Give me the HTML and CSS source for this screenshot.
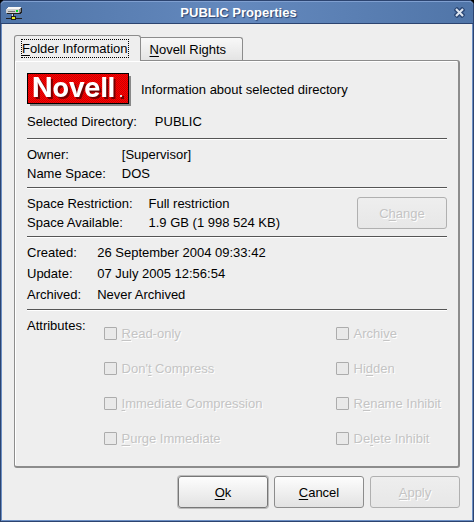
FILE: index.html
```html
<!DOCTYPE html>
<html lang="en">
<head>
	<meta charset="utf-8">
	<meta name="viewport" content="width=device-width, initial-scale=1">

	<title>PUBLIC Properties</title>

	<link rel="stylesheet" href="styles.css">
</head>
<body>
	<div class="window">

		<!-- Title bar -->
		<header class="title-bar">
			<svg class="title-icon" width="18" height="16" viewBox="0 0 18 16" shape-rendering="crispEdges">
				<path d="M3 2h13v1h1v5h-1v1H2V8H1V5h1V4h1z" fill="#222"/>
				<path d="M3 2h13v1h-1v1H2V3h1z" fill="#f8f8f8"/>
				<path d="M1 4h13v4H1z" fill="#d0d0d0"/>
				<path d="M14 4h1V3h1v4h-1v1h-1z" fill="#888"/>
				<path d="M3 6h7v1H3z" fill="#777"/>
				<path d="M11 5h2v2h-2z" fill="#0d2"/>
				<path d="M7 9h2v2H7zM1 13h16v1H1z" fill="#222"/>
				<path d="M6 11h5v4H6z" fill="#222"/>
				<path d="M7 12h3v2H7z" fill="#ee2"/>
				<path d="M7 9h1v2H7z" fill="#ddd"/>
			</svg>
			<h1 class="title-text">PUBLIC Properties</h1>
			<button type="button" class="btn-close" aria-label="Close">
				<svg width="11" height="11" viewBox="0 0 11 11">
					<path d="M3 3l5 5m0-5l-5 5" stroke="#2e4a78" stroke-width="5" stroke-linecap="square"/>
					<path d="M2 2l7 7m0-7l-7 7" stroke="#dfe6f0" stroke-width="2"/>
				</svg>
			</button>
		</header>

		<form class="content">
			<!-- Tabs -->
			<div class="tabs" role="tablist">
				<button type="button" class="tab tab-active" role="tab" aria-selected="true"><span class="tab-label"><u>F</u>older Information</span></button>
				<button type="button" class="tab" role="tab" aria-selected="false"><span class="tab-label"><u>N</u>ovell Rights</span></button>
			</div>

			<div class="panel" role="tabpanel">
				<div class="intro">
					<svg class="logo" width="104" height="33" viewBox="0 0 104 33">
						<defs>
							<pattern id="dots" width="2" height="2" patternUnits="userSpaceOnUse">
								<path d="M0 0h2v2H0z" fill="#f00"/>
								<path d="M0 0h1v1H0zM1 1h1v1H1z" fill="#cc0000"/>
							</pattern>
						</defs>
						<path d="M3 3h101v30H3z" fill="#888"/>
						<path d="M0 0h102v31H0z" fill="#000"/>
						<path d="M1 1h100v29H1z" fill="url(#dots)"/>
						<text class="logo-text" x="5" y="24">Novell</text>
						<path d="M94 23h3v3h-3z" fill="#700"/>
						<path d="M93 22h2v2h-2z" fill="#ddd"/>
					</svg>
					<p>Information about selected directory</p>
				</div>

				<dl class="details selected">
					<dt>Selected Directory:</dt>
					<dd>PUBLIC</dd>
				</dl>

				<div class="section">
					<dl class="details">
						<dt>Owner:</dt>
						<dd>[Supervisor]</dd>
						<dt>Name Space:</dt>
						<dd>DOS</dd>
					</dl>
				</div>

				<div class="section">
					<dl class="details">
						<dt>Space Restriction:</dt>
						<dd>Full restriction</dd>
						<dt>Space Available:</dt>
						<dd>1.9 GB (1 998 524 KB)</dd>
					</dl>
					<button type="button" class="btn" disabled>C<u>h</u>ange</button>
				</div>

				<div class="section section-dates">
					<dl class="details">
						<dt>Created:</dt>
						<dd>26 September 2004 09:33:42</dd>
						<dt>Update:</dt>
						<dd>07 July 2005 12:56:54</dd>
						<dt>Archived:</dt>
						<dd>Never Archived</dd>
					</dl>
				</div>

				<div class="section section-attributes">
					<p class="attributes-title">Attributes:</p>
					<div class="attributes">
						<label class="check"><input type="checkbox" disabled><span><u>R</u>ead-only</span></label>
						<label class="check"><input type="checkbox" disabled><span>Archi<u>v</u>e</span></label>
						<label class="check"><input type="checkbox" disabled><span>Don'<u>t</u> Compress</span></label>
						<label class="check"><input type="checkbox" disabled><span>Hi<u>d</u>den</span></label>
						<label class="check"><input type="checkbox" disabled><span><u>I</u>mmediate Compression</span></label>
						<label class="check"><input type="checkbox" disabled><span>R<u>e</u>name Inhibit</span></label>
						<label class="check"><input type="checkbox" disabled><span><u>P</u>urge Immediate</span></label>
						<label class="check"><input type="checkbox" disabled><span>De<u>l</u>ete Inhibit</span></label>
					</div>
				</div>
			</div>

			<!-- Dialog buttons -->
			<div class="actions">
				<button type="submit" class="btn btn-default"><u>O</u>k</button>
				<button type="button" class="btn"><u>C</u>ancel</button>
				<button type="button" class="btn" disabled><u>A</u>pply</button>
			</div>
		</form>
	</div>
</body>
</html>
```
FILE: styles.css
```css
* {
	box-sizing: border-box;
}

body {
	margin: 0;
	background-color: #000;
}

body, button, input {
	font-family: "Liberation Sans", Arial, sans-serif;
	font-size: 13px;
	color: #000;
}

p, dl, dd, h1 {
	margin: 0;
}

u {
	text-underline-offset: 2px;
}

/* Window */
.window {
	display: flex;
	flex-direction: column;
	min-height: 100vh;
	border: 1px solid #2c4470;
	border-radius: 5px 5px 0 0;
	background-color: #eee;
	box-shadow: inset 0 0 0 1px #6c8fc4;
}

.title-bar {
	display: flex;
	align-items: center;
	height: 23px;
	padding: 0 8px 0 4px;
	border-top: 1px solid #7f9fd0;
	border-bottom: 1px solid #2c4470;
	border-radius: 4px 4px 0 0;
	background: linear-gradient(to right, #5075a8, #6489be 50%, #5075a8);
}

.title-text {
	flex: 1;
	font-size: 13px;
	line-height: 20px;
	text-align: center;
	color: #fff;
	text-shadow: 1px 1px 1px #2c4470;
}

.btn-close {
	display: flex;
	padding: 0;
	border: none;
	background: none;
}

.content {
	display: flex;
	flex: 1;
	flex-direction: column;
	padding: 11px 13px 13px;
}

/* Tabs */
.tabs {
	display: flex;
	align-items: flex-end;
	position: relative;
	margin-bottom: -1px;
}

.tab {
	height: 23px;
	margin-bottom: 1px;
	padding: 0 14px 0 7px;
	border: 1px solid #8c8c8c;
	border-left: none;
	border-bottom: none;
	border-radius: 0 3px 0 0;
	background: linear-gradient(#f8f8f8, #e4e4e4);
}

.tab-active {
	height: 26px;
	margin-bottom: 0;
	padding: 0 11px 0 6px;
	border-left: 1px solid #8c8c8c;
	border-radius: 3px 3px 0 0;
	background: #eee;
}

.tab-label {
	display: block;
	padding: 0 1px;
	border: 1px solid transparent;
	line-height: 17px;
}

.tab-active .tab-label {
	padding: 0;
	border: 1px dotted #000;
}

/* Panel */
.panel {
	flex: 1;
	padding: 12px 12px 4px;
	border: 1px solid #8c8c8c;
	border-right: 2px solid #8c8c8c;
	border-bottom: 2px solid #8c8c8c;
	border-radius: 0 3px 3px 3px;
	box-shadow: inset 1px 1px 0 #fff;
}

.intro {
	display: flex;
	align-items: center;
	gap: 10px;
}

.logo-text {
	font-family: Inter, "Liberation Sans", sans-serif;
	font-size: 27px;
	font-weight: 700;
	fill: #fff;
	filter: drop-shadow(2px 2px 0 #700);
}

.details {
	display: grid;
	flex: 1;
	grid-template-columns: max-content 1fr;
	column-gap: 16px;
	line-height: 19px;
}

.selected {
	column-gap: 18px;
	padding: 6px 0 7px;
}

.section {
	display: flex;
	align-items: center;
	margin-right: -1px;
	padding: 6px 0 4px;
	border-top: 1px solid #555;
	box-shadow: inset 0 1px 0 #fff;
}

.section-dates {
	padding-bottom: 5px;
}

.section-dates .details {
	row-gap: 2px;
}

/* Attributes */
.section-attributes {
	align-items: flex-start;
	gap: 18px;
}

.attributes-title {
	line-height: 19px;
}

.attributes {
	display: grid;
	flex: 1;
	grid-template-columns: 232px 1fr;
	grid-auto-rows: 35px;
}

.check {
	display: flex;
	align-items: center;
	gap: 5px;
	color: #c4c4c4;
	text-shadow: 1px 1px 0 #fff;
	white-space: nowrap;
}

.check input {
	appearance: none;
	width: 13px;
	height: 13px;
	margin: 0;
	border: 1px solid #acacac;
	border-radius: 1px;
	background-color: #e9e9e9;
}

/* Buttons */
.btn {
	width: 90px;
	height: 32px;
	border: 1px solid #8c8c8c;
	border-radius: 3px;
	background: linear-gradient(#fdfdfd, #e2e2e2);
}

.btn:disabled {
	border-color: #b0b0b0;
	background: linear-gradient(#eee, #e7e7e7);
	color: #c4c4c4;
	text-shadow: 1px 1px 0 #fff;
}

.btn-default {
	border-color: #777;
	box-shadow: 0 0 0 1px #bbb;
}

.actions {
	display: flex;
	justify-content: flex-end;
	gap: 6px;
	padding-top: 8px;
}
```
